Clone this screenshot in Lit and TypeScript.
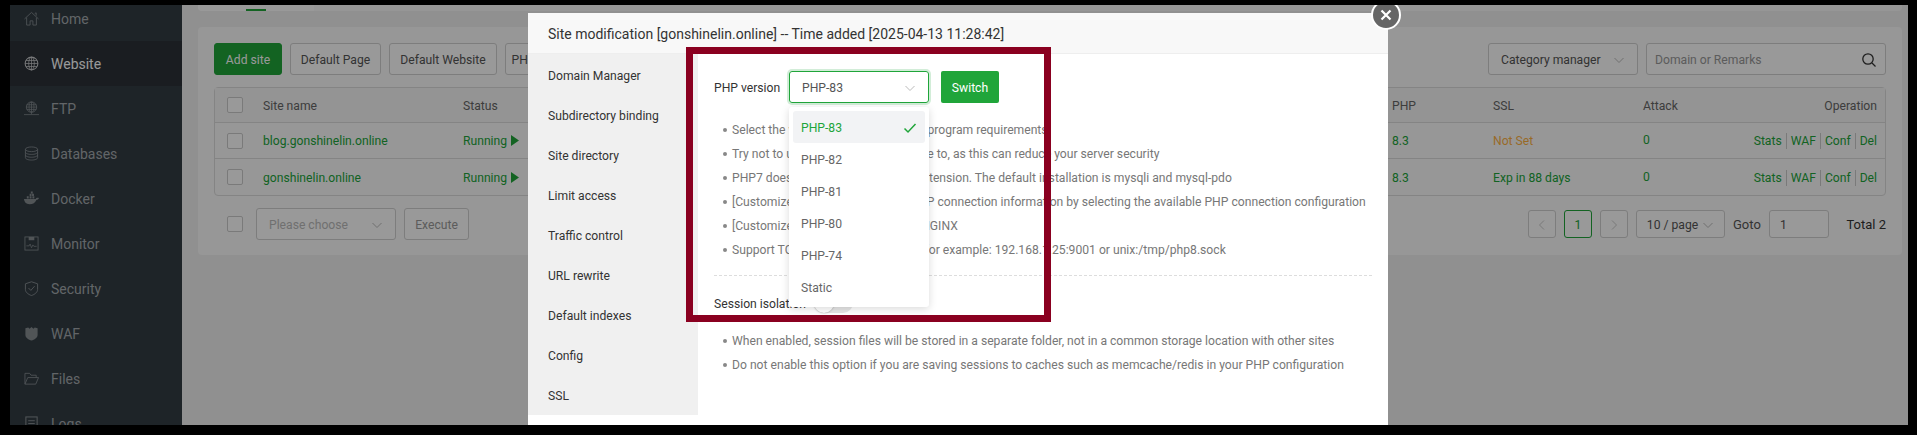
import { LitElement, html, css, svg } from "lit";
import { customElement } from "lit/decorators.js";

const ICONS: Record<string, unknown> = {
  Home: svg`<path d="M.5 8.500 8 1.500l7.500 7M2.800 7v8h3.700v-4.500h3V15h3.700V7M11.500 2.500l1.500-.5V5" fill="none" stroke="currentColor" stroke-width=".9"/>`,
  Website: svg`<circle cx="8" cy="8" r="6.800" fill="none" stroke="currentColor" stroke-width="1.100"/><ellipse cx="8" cy="8" rx="3" ry="6.800" fill="none" stroke="currentColor" stroke-width=".8"/><path d="M8 1.200v13.600M1.200 8h13.600M2.200 4.800h11.600M2.200 11.200h11.600" stroke="currentColor" fill="none" stroke-width=".8"/>`,
  FTP: svg`<circle cx="8" cy="6.500" r="5.500" fill="none" stroke="currentColor" stroke-width=".9"/><ellipse cx="8" cy="6.500" rx="2.600" ry="5.500" fill="none" stroke="currentColor" stroke-width=".7"/><path d="M8 1v11M2.500 6.500h11M3 4h10M3 9h10M0 14.500h16M8 12v2" stroke="currentColor" fill="none" stroke-width=".8"/>`,
  Databases: svg`<ellipse cx="8" cy="3.500" rx="6.500" ry="2.500" fill="none" stroke="currentColor" stroke-width=".9"/><path d="M1.500 3.500v9c0 1.400 2.900 2.500 6.500 2.500s6.500-1.100 6.500-2.500v-9M1.500 6.500c0 1.400 2.900 2.500 6.500 2.500s6.500-1.100 6.500-2.500M1.500 9.500c0 1.400 2.900 2.500 6.500 2.500s6.500-1.100 6.500-2.500" fill="none" stroke="currentColor" stroke-width=".9"/>`,
  Docker: svg`<path d="M0 8.500h12.500c.4-1 1.500-1.500 3.500-1-.5 1.300-1.500 2-2.800 2C12 12.500 9.500 14 6 14 2 14 .3 11.500 0 8.500Z" fill="currentColor"/><path d="M3 5.700h2v2.200H3zM6 5.700h2v2.200H6zM9 5.700h2v2.200H9zM6 3h2v2.200H6zM8.600 3h2v2.200h-2zM7.300.6h2v2h-2z" fill="currentColor"/>`,
  Monitor: svg`<rect x="1" y="1" width="14" height="14" fill="none" stroke="currentColor" stroke-width=".9"/><rect x="5" y="1" width="6" height="3.500" fill="currentColor"/><path d="M2.500 10.500h3l1-2 1.500 4 1.500-3 1 1.500h3" fill="none" stroke="currentColor" stroke-width=".8"/>`,
  Security: svg`<path d="M8 .8 14.500 3v6c0 3-3 5.300-6.500 6.500C4.500 14.300 1.500 12 1.500 9V3Z" fill="none" stroke="currentColor"/><path d="m4.800 7.500 2.500 2.500 4-4.500" fill="none" stroke="currentColor"/>`,
  WAF: svg`<path d="M1.500 2.500 4.500 1.500 6 3l2-2 2 2 1.500-1.500 3 1v7C14.500 12.500 11 14.500 8 15.500 5 14.500 1.500 12.500 1.500 9.500Z" fill="currentColor"/>`,
  Files: svg`<path d="M1 14V2.500h5l1.500 2H13V7M1 14h11.500L15.500 7H4Z" fill="none" stroke="currentColor" stroke-width=".9"/>`,
  Logs: svg`<rect x="2" y="1" width="12" height="14" fill="none" stroke="currentColor" stroke-width="1.100"/><path d="M4.500 5h7M4.500 8h7" stroke="currentColor"/>`,
};

const chevron = () => html`<svg class="chev" viewBox="0 0 12 12" width="12" height="12"><path d="m1.500 4 4.500 4.500L10.500 4" fill="none" stroke="currentColor"/></svg>`;

@customElement("app-root")
export class AppRoot extends LitElement {
  static styles = css`
    :host { display: block; width: 1917px; height: 435px; background: #000; padding: 5px 9px 10px 10px; box-sizing: border-box; font-family: Roboto, "Open Sans", sans-serif; font-size: 12.15px; color: #333; }
    * { box-sizing: border-box; }
    .stage { position: relative; width: 100%; height: 100%; overflow: hidden; display: flex; background: #f0f0f0; }
    .side { width: 172px; flex: none; background: #333d44; color: #a3a9ad; margin-top: -9px; font-size: 14px; }
    .nav { height: 45px; display: flex; align-items: center; gap: 12px; padding-left: 14px; }
    .nav svg { width: 15px; height: 15px; flex: none; opacity: .75; }
    .nav.on { background: #2c3138; color: #fff; }
    .main { flex: 1; padding: 0 6px 0 16px; min-width: 0; }
    .tabs { height: 6px; background: #fafafa; border-radius: 0 0 4px 4px; position: relative; margin-bottom: 16px; overflow: hidden; }
    .tabs b { position: absolute; left: 0; top: 0; bottom: 0; width: 116px; background: #fff; }
    .tabs i { position: absolute; left: 48px; bottom: 0; width: 20px; height: 2px; background: #20a53a; }
    .card { background: #fcfcfc; border-radius: 4px; height: 228px; padding: 16px; }
    .bar { display: flex; gap: 8px; height: 32px; }
    .btn { height: 32px; border: 1px solid #d0d0d0; background: #fff; border-radius: 3px; display: flex; align-items: center; justify-content: center; color: #555; white-space: nowrap; padding-top: 1px; }
    .btn.green { background: #20a53a; border-color: #20a53a; color: #fff; }
    .sp { flex: 1; }
    .cat { width: 150px; justify-content: space-between; padding: 1px 12px 0; }
    .search { width: 240px; justify-content: space-between; padding: 1px 8px 0; color: #999; }
    .chev { color: #bbb; }
    .grid { margin-top: 12px; border: 1px solid #dcdcdc; border-radius: 4px; }
    .row { display: grid; grid-template-columns: 36px 200px 929px 101px 150px 1fr; align-items: center; padding-left: 12px; padding-right: 8px; height: 36px; border-top: 1px solid #dcdcdc; color: #20a53a; }
    .row.head { height: 34px; border-top: 0; background: #f7f7f7; color: #666; }
    .row.head > span, .row.head .end { padding-top: 2px; }
    .row.last { height: 37px; }
    .row.last > span, .row.last .end { padding-top: 1px; }
    .cb { width: 16px; height: 16px; border: 1px solid #ccc; background: #fff; border-radius: 2px; display: block; }
    .run { display: flex; align-items: center; gap: 4px; }
    .run svg { width: 8px; height: 11px; }
    .end { display: flex; justify-content: space-between; }
    .ops { display: flex; justify-content: flex-end; align-items: center; }
    .ops span { padding: 0 4px; border-left: 1px solid #ccc; line-height: 16px; }
    .ops span:first-child { border: 0; }
    .ops span:last-child { padding-right: 0; }
    .warn { color: #ff9900; opacity: .75; }
    .foot { display: flex; align-items: center; margin-top: 12px; padding-left: 13px; height: 32px; }
    .foot .cb { margin-right: 13px; }
    .sel { width: 140px; justify-content: space-between; padding: 1px 12px 0; color: #bbb; margin-right: 8px; }
    .exec { width: 65px; color: #999; }
    .pg { width: 28px; height: 28px; margin-right: 8px; color: #ccc; }
    .pg.cur { border-color: #20a53a; color: #20a53a; }
    .pg svg { width: 12px; height: 12px; }
    .size { width: 89px; height: 28px; margin-right: 8px; gap: 4px; }
    .goto { width: 28px; margin-right: 8px; font-size: 13px; color: #555; }
    .inp { width: 60px; height: 28px; justify-content: flex-start; padding-left: 10px; margin-right: 17px; }
    .total { width: 40px; font-size: 13px; color: #333; white-space: nowrap; text-align: right; }

    .mask { position: absolute; inset: 0; background: rgba(0, 0, 0, .4); }
    .modal { position: absolute; left: 518px; top: 8px; width: 860px; height: 500px; background: #fff; display: flex; flex-direction: column; }
    .mhead { height: 41px; flex: none; background: #f8f8f8; border-bottom: 1px solid #eee; padding: 1px 0 0 20px; display: flex; align-items: center; font-size: 14px; color: #333; }
    .mbody { display: flex; flex: 1; }
    .mnav { width: 170px; height: 361px; flex: none; background: #f0f0f0; padding-top: 2px; }
    .mnav div { height: 40px; display: flex; align-items: center; padding-left: 20px; color: #333; }
    .mcont { flex: 1; min-width: 0; padding: 17px 16px 0 16px; position: relative; }
    .form { display: flex; align-items: center; height: 32px; }
    .lbl { width: 75px; color: #333; padding-top: 1px; }
    .vs { width: 140px; height: 32px; border: 1px solid #20a53a; border-radius: 3px; box-shadow: 0 0 0 2px #d2edd8; display: flex; justify-content: space-between; align-items: center; padding: 1px 12px 0; color: #555; }
    .sw { width: 58px; height: 32px; margin-left: 12px; padding-top: 1px; background: #20a53a; color: #fff; border-radius: 2px; display: flex; align-items: center; justify-content: center; }
    ul { list-style: none; margin: 0; padding: 0 0 0 2px; color: #777; }
    ul.a { margin-top: 15px; }
    li { height: 24px; line-height: 24px; white-space: nowrap; padding-left: 16px; position: relative; }
    li::before { content: ""; position: absolute; left: 7px; top: 10px; width: 4px; height: 4px; border-radius: 50%; background: #888; }
    .dash { border-top: 1px dashed #ddd; margin-top: 13px; }
    .sess { display: flex; align-items: center; height: 20px; margin-top: 17px; }
    .sess span { width: 100px; padding-top: 1px; }
    .tog { width: 39px; height: 20px; border-radius: 10px; background: #e6e6e6; position: relative; }
    .tog::after { content: ""; position: absolute; left: 0; top: 0; width: 20px; height: 20px; border-radius: 50%; background: #fff; box-shadow: 0 0 2px #999; }
    ul.b { margin-top: 16px; }
    .drop { position: absolute; left: 91px; top: 53px; width: 140px; height: 200px; background: #fff; border-radius: 3px; box-shadow: 0 2px 8px rgba(0,0,0,.15); padding: 4px; }
    .drop div { height: 32px; display: flex; align-items: center; justify-content: space-between; padding: 2px 8px 0; border-radius: 3px; color: #666; }
    .drop .on { background: #f2f3f5; color: #20a53a; }
    .anno { position: absolute; left: 676px; top: 42px; width: 365px; height: 275px; border: 7px solid #8a0020; }
    .close { position: absolute; left: 1361px; top: -5px; width: 30px; height: 30px; border-radius: 50%; background: #666; border: 2px solid #fff; display: flex; align-items: center; justify-content: center; }
  `;

  render() {
    const sites = [
      ["blog.gonshinelin.online", "Not Set", true],
      ["gonshinelin.online", "Exp in 88 days", false],
    ] as const;
    const ops = html`<div class="ops"><span>Stats</span><span>WAF</span><span>Conf</span><span>Del</span></div>`;
    return html`<div class="stage">
      <aside class="side">
        ${Object.keys(ICONS).map((k) => html`<div class="nav ${k === "Website" ? "on" : ""}"><svg viewBox="0 0 16 16">${ICONS[k]}</svg><span>${k}</span></div>`)}
      </aside>
      <main class="main">
        <div class="tabs"><b></b><i></i></div>
        <section class="card">
          <div class="bar">
            <div class="btn green" style="width:68px">Add site</div>
            <div class="btn" style="width:91px">Default Page</div>
            <div class="btn" style="width:108px">Default Website</div>
            <div class="btn" style="width:100px">PHP CLI version</div>
            <div class="sp"></div>
            <div class="btn cat"><span>Category manager</span>${chevron()}</div>
            <div class="btn search"><span>Domain or Remarks</span><svg width="16" height="16" viewBox="0 0 16 16"><circle cx="7" cy="7" r="5.200" fill="none" stroke="#333" stroke-width="1.300"/><path d="m11 11 3.500 3.500" stroke="#333" stroke-width="1.300"/></svg></div>
          </div>
          <div class="grid">
            <div class="row head"><i class="cb"></i><span>Site name</span><span>Status</span><span>PHP</span><span>SSL</span><div class="end"><span>Attack</span><span>Operation</span></div></div>
            ${sites.map((s, i) => html`<div class="row ${i === 1 ? "last" : ""}"><i class="cb"></i><span>${s[0]}</span><span class="run">Running <svg viewBox="0 0 8 11"><path d="M0 0l8 5.500L0 11Z" fill="currentColor"/></svg></span><span>8.3</span><span class=${s[2] ? "warn" : ""}>${s[1]}</span><div class="end"><span>0</span>${ops}</div></div>`)}
          </div>
          <div class="foot">
            <i class="cb"></i>
            <div class="btn sel"><span>Please choose</span>${chevron()}</div>
            <div class="btn exec">Execute</div>
            <div class="sp"></div>
            <div class="btn pg"><svg viewBox="0 0 12 12"><path d="M8 1.500 3.500 6 8 10.500" fill="none" stroke="currentColor"/></svg></div>
            <div class="btn pg cur">1</div>
            <div class="btn pg"><svg viewBox="0 0 12 12"><path d="M4 1.500 8.500 6 4 10.500" fill="none" stroke="currentColor"/></svg></div>
            <div class="btn size"><span>10 / page</span>${chevron()}</div>
            <span class="goto">Goto</span>
            <div class="btn inp">1</div>
            <span class="total">Total 2</span>
          </div>
        </section>
      </main>
      <div class="mask"></div>
      <div class="modal">
        <div class="mhead">Site modification [gonshinelin.online] -- Time added [2025-04-13 11:28:42]</div>
        <div class="mbody">
          <div class="mnav">${["Domain Manager","Subdirectory binding","Site directory","Limit access","Traffic control","URL rewrite","Default indexes","Config","SSL"].map((n) => html`<div>${n}</div>`)}</div>
          <div class="mcont">
            <div class="form"><span class="lbl">PHP version</span><div class="vs"><span>PHP-83</span>${chevron()}</div><div class="sw">Switch</div></div>
            <ul class="a">
              <li>Select the version according to your program requirements</li>
              <li>Try not to use versions you don't have to, as this can reduce your server security</li>
              <li>PHP7 does not support the mysql extension. The default installation is mysqli and mysql-pdo</li>
              <li>[Customize PHP] Set the custom PHP connection information by selecting the available PHP connection configuration</li>
              <li>[Customize PHP] Currently only for NGINX</li>
              <li>Support TCP or UNIX configuration, for example: 192.168.1.25:9001 or unix:/tmp/php8.sock</li>
            </ul>
            <div class="dash"></div>
            <div class="sess"><span>Session isolation</span><div class="tog"></div></div>
            <ul class="b">
              <li>When enabled, session files will be stored in a separate folder, not in a common storage location with other sites</li>
              <li>Do not enable this option if you are saving sessions to caches such as memcache/redis in your PHP configuration</li>
            </ul>
            <div class="drop">
              <div class="on"><span>PHP-83</span><svg width="14" height="14" viewBox="0 0 14 14"><path d="m1.500 7.500 3.500 3.500L12.500 3" fill="none" stroke="#20a53a" stroke-width="1.500"/></svg></div>
              ${["PHP-82","PHP-81","PHP-80","PHP-74","Static"].map((p) => html`<div>${p}</div>`)}
            </div>
          </div>
        </div>
      </div>
      <div class="anno"></div>
      <div class="close"><svg width="12" height="12" viewBox="0 0 12 12"><path d="m1.500 1.500 9 9M10.500 1.500l-9 9" stroke="#fff" stroke-width="2.200"/></svg></div>
    </div>`;
  }
}
